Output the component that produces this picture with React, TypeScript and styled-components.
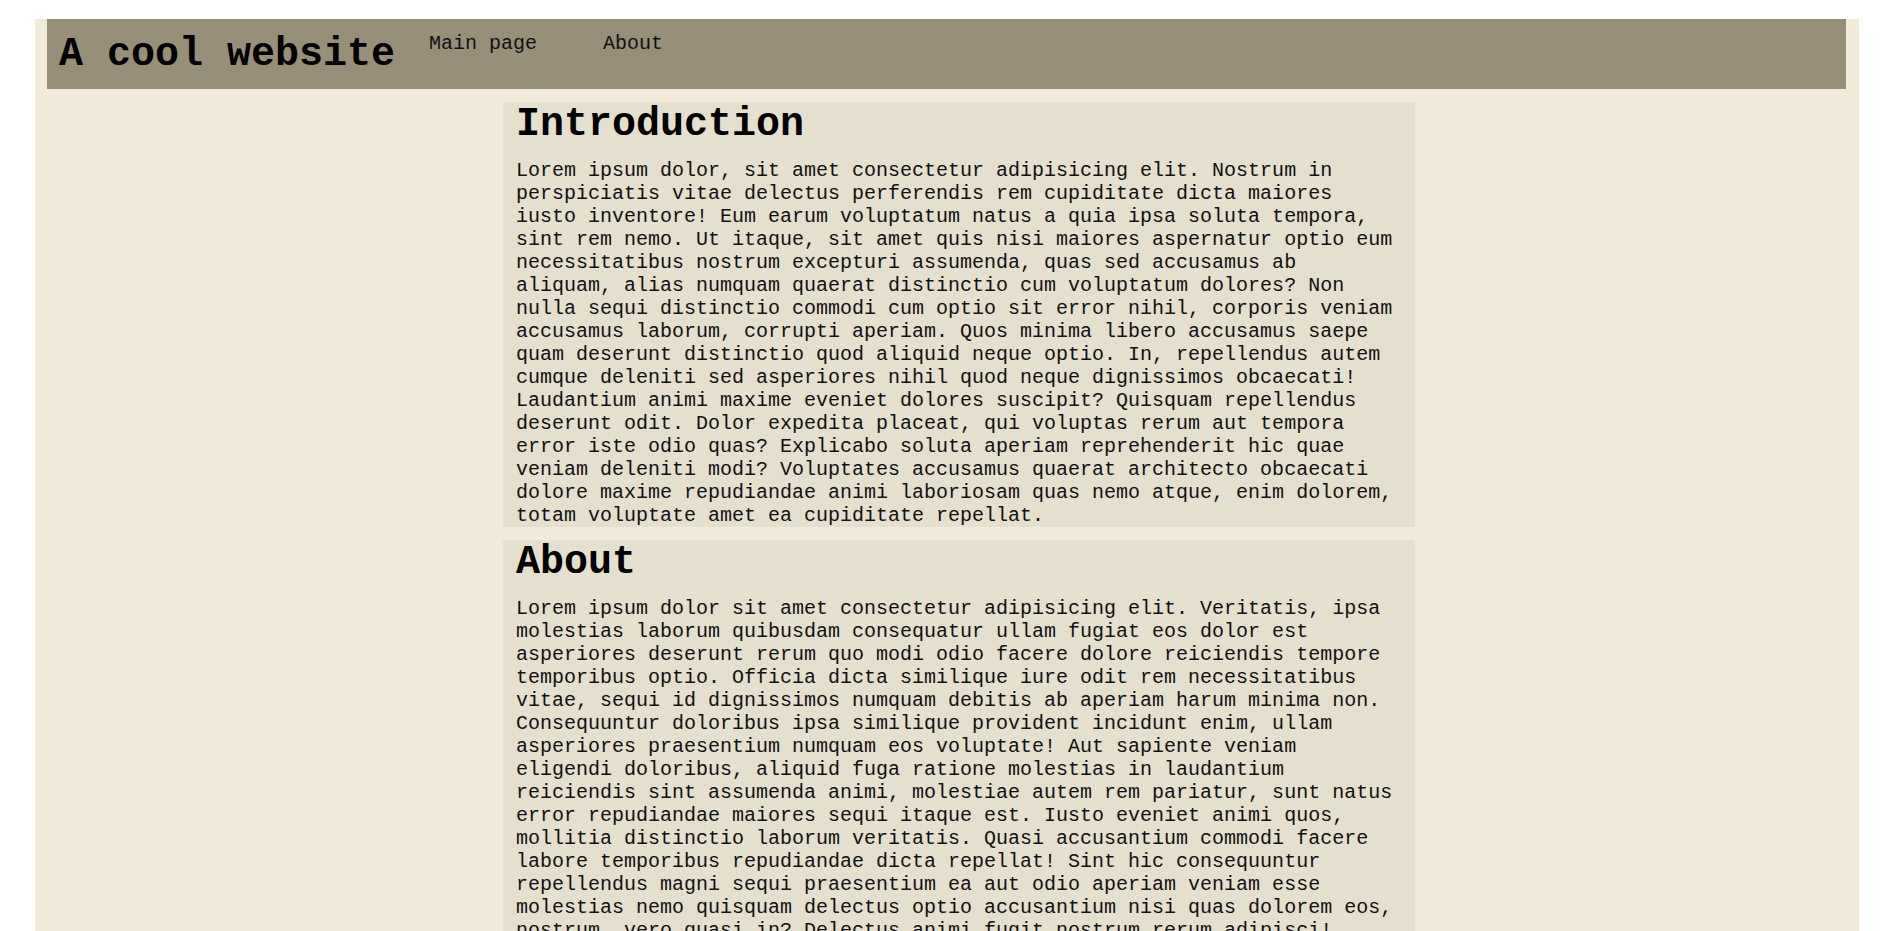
import React from "react";
import styled, { createGlobalStyle } from "styled-components";

const GlobalStyle = createGlobalStyle`
  body {
    margin: 0;
    background: #ffffff;
    font-family: "Liberation Mono", "Courier New", monospace;
    color: #111;
  }
`;

const Page = styled.div`
  margin: 19px 32px 0 35px;
  min-height: 912px;
  background-color: #f2ebda;
  padding: 0 13px 13px 12px;
`;

const Header = styled.header`
  display: flex;
  align-items: flex-start;
  background-color: #988f79;
  padding: 13px 12px 12px;
`;

const Title = styled.h1`
  margin: 0;
  font-size: 40px;
  line-height: 45px;
  font-weight: bold;
  color: #000;
`;

const NavList = styled.ul`
  display: flex;
  gap: 66px;
  list-style: none;
  margin: 0 0 0 34px;
  padding: 0;
`;

const NavLink = styled.a`
  font-size: 20px;
  line-height: 23px;
  color: #111;
  text-decoration: none;
`;

const Main = styled.main`
  display: flex;
  flex-direction: column;
  gap: 13px;
  padding: 13px 0 0 25px;
`;

const Section = styled.section`
  width: 912px;
  margin: 0 auto;
  padding: 0 13px;
  box-sizing: border-box;
  background-color: #e5dfcd;
`;

const Heading = styled.h2`
  margin: 0;
  font-size: 40px;
  line-height: 45px;
  font-weight: bold;
  color: #000;
`;

const Text = styled.p`
  margin: 12px 0 0;
  font-size: 20px;
  line-height: 23px;
`;

const sections = [
  {
    title: "Introduction",
    body: "Lorem ipsum dolor, sit amet consectetur adipisicing elit. Nostrum in perspiciatis vitae delectus perferendis rem cupiditate dicta maiores iusto inventore! Eum earum voluptatum natus a quia ipsa soluta tempora, sint rem nemo. Ut itaque, sit amet quis nisi maiores aspernatur optio eum necessitatibus nostrum excepturi assumenda, quas sed accusamus ab aliquam, alias numquam quaerat distinctio cum voluptatum dolores? Non nulla sequi distinctio commodi cum optio sit error nihil, corporis veniam accusamus laborum, corrupti aperiam. Quos minima libero accusamus saepe quam deserunt distinctio quod aliquid neque optio. In, repellendus autem cumque deleniti sed asperiores nihil quod neque dignissimos obcaecati! Laudantium animi maxime eveniet dolores suscipit? Quisquam repellendus deserunt odit. Dolor expedita placeat, qui voluptas rerum aut tempora error iste odio quas? Explicabo soluta aperiam reprehenderit hic quae veniam deleniti modi? Voluptates accusamus quaerat architecto obcaecati dolore maxime repudiandae animi laboriosam quas nemo atque, enim dolorem, totam voluptate amet ea cupiditate repellat.",
  },
  {
    title: "About",
    body: "Lorem ipsum dolor sit amet consectetur adipisicing elit. Veritatis, ipsa molestias laborum quibusdam consequatur ullam fugiat eos dolor est asperiores deserunt rerum quo modi odio facere dolore reiciendis tempore temporibus optio. Officia dicta similique iure odit rem necessitatibus vitae, sequi id dignissimos numquam debitis ab aperiam harum minima non. Consequuntur doloribus ipsa similique provident incidunt enim, ullam asperiores praesentium numquam eos voluptate! Aut sapiente veniam eligendi doloribus, aliquid fuga ratione molestias in laudantium reiciendis sint assumenda animi, molestiae autem rem pariatur, sunt natus error repudiandae maiores sequi itaque est. Iusto eveniet animi quos, mollitia distinctio laborum veritatis. Quasi accusantium commodi facere labore temporibus repudiandae dicta repellat! Sint hic consequuntur repellendus magni sequi praesentium ea aut odio aperiam veniam esse molestias nemo quisquam delectus optio accusantium nisi quas dolorem eos, nostrum, vero quasi in? Delectus animi fugit nostrum rerum adipisci! Voluptatem, quibusdam.",
  },
];

export default function App() {
  return (
    <>
      <GlobalStyle />
      <Page>
        <Header>
          <Title>A cool website</Title>
          <nav>
            <NavList>
              <li>
                <NavLink href="#">Main page</NavLink>
              </li>
              <li>
                <NavLink href="#">About</NavLink>
              </li>
            </NavList>
          </nav>
        </Header>
        <Main>
          {sections.map((s) => (
            <Section key={s.title}>
              <Heading>{s.title}</Heading>
              <Text>{s.body}</Text>
            </Section>
          ))}
        </Main>
      </Page>
    </>
  );
}
